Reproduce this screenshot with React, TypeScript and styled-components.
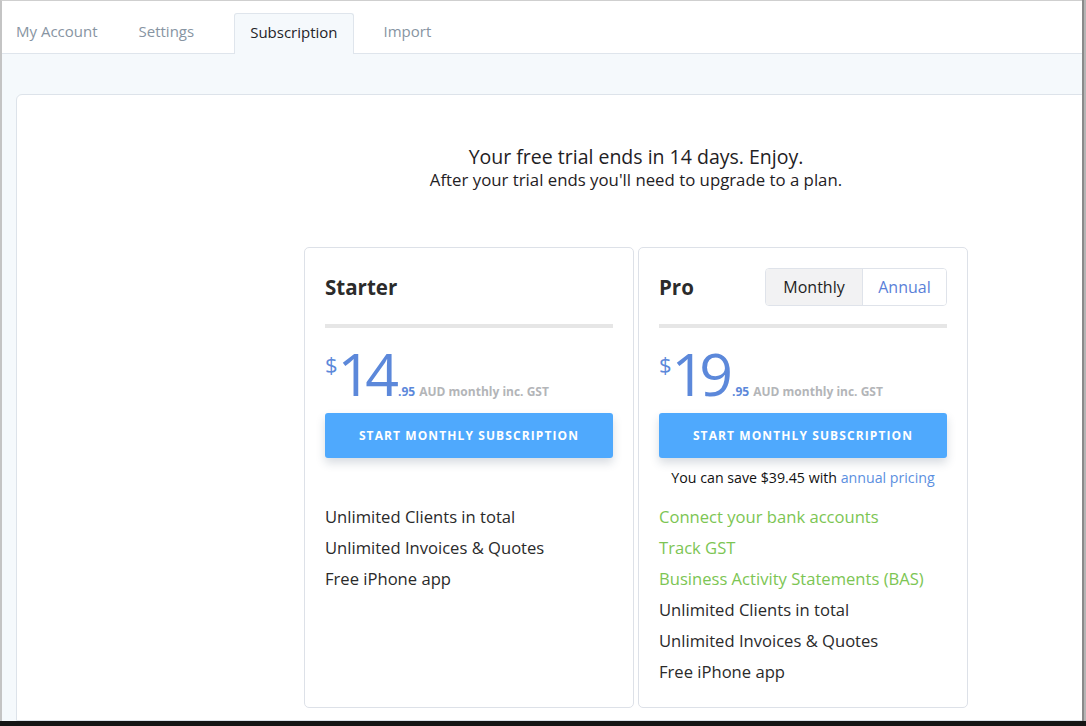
import React from "react";
import styled, { createGlobalStyle } from "styled-components";

const Global = createGlobalStyle`
  html, body { margin: 0; padding: 0; }
  body { font-family: "Open Sans", "Liberation Sans", sans-serif; }
  * { box-sizing: border-box; }
`;

const FONT = `"Open Sans", "Liberation Sans", sans-serif`;

const Frame = styled.div`
  width: 1086px;
  height: 726px;
  background: #151515;
  display: flex;
  flex-direction: column;
  overflow: hidden;
`;

const Screen = styled.div`
  flex: 1;
  margin: 0 4px 5px 0;
  border-top: 1px solid #cfcfcf;
  border-left: 2px solid #c4c4c4;
  box-shadow: 2px 0 0 #8a8a8a, 4px 0 0 #b5b5b5;
  background: #f5f9fc;
  overflow: hidden;
  display: flex;
  flex-direction: column;
  font-family: ${FONT};
`;

const TabBar = styled.div`
  height: 53px;
  flex: none;
  background: #ffffff;
  border-bottom: 1px solid #dfe5ec;
  display: flex;
  align-items: flex-end;
`;

const Tab = styled.div<{ $active?: boolean; $gap: number }>`
  height: ${(p) => (p.$active ? "41px" : "40px")};
  margin-bottom: ${(p) => (p.$active ? "-1px" : "0")};
  margin-right: ${(p) => p.$gap}px;
  padding: 0 ${(p) => (p.$active ? 15 : 16)}px 5px;
  display: flex;
  align-items: center;
  font-size: 15px;
  color: ${(p) => (p.$active ? "#1f2328" : "#8794a2")};
  background: ${(p) => (p.$active ? "#f5f9fc" : "transparent")};
  border: 1px solid ${(p) => (p.$active ? "#dfe5ec" : "transparent")};
  border-bottom: none;
  border-radius: 3px 3px 0 0;
  &:first-child { margin-left: -3px; }
`;

const Body = styled.div`
  flex: 1;
  padding: 40px 0 0 14px;
  display: flex;
`;

const Card = styled.div`
  width: 1240px;
  flex: none;
  background: #ffffff;
  border: 1px solid #dde3ea;
  border-radius: 6px 6px 0 0;
  display: flex;
  flex-direction: column;
  align-items: center;
  padding-top: 50px;
`;

const Heading = styled.h1`
  margin: 0;
  font-size: 19.5px;
  line-height: 24px;
  font-weight: 400;
  color: #1f2124;
`;

const Sub = styled.p`
  margin: 0;
  font-size: 16.8px;
  line-height: 22px;
  color: #1f2124;
`;

const Plans = styled.div`
  margin-top: 56px;
  display: flex;
  gap: 4px;
`;

const Plan = styled.div`
  width: 330px;
  border: 1px solid #dde1e8;
  border-radius: 5px;
  padding: 20px 20px 20px;
  display: flex;
  flex-direction: column;
`;

const PlanHead = styled.div`
  height: 38px;
  display: flex;
  align-items: center;
  justify-content: space-between;
`;

const PlanName = styled.h2`
  margin: 0;
  font-size: 20.5px;
  font-weight: 700;
  color: #2b2b2b;
`;

const Toggle = styled.div`
  display: flex;
  height: 38px;
  border: 1px solid #dfe3ea;
  border-radius: 4px;
  overflow: hidden;
`;

const ToggleOpt = styled.div<{ $on?: boolean; $w: number }>`
  width: ${(p) => p.$w}px;
  display: flex;
  align-items: center;
  justify-content: center;
  font-size: 16px;
  background: ${(p) => (p.$on ? "#f2f2f3" : "#ffffff")};
  color: ${(p) => (p.$on ? "#1e1e1e" : "#5a7fd8")};
  & + & { border-left: 1px solid #dfe3ea; }
`;

const Divider = styled.div`
  height: 4px;
  background: #e6e6e6;
  margin-top: 18px;
`;

const PriceRow = styled.div`
  display: flex;
  align-items: baseline;
  margin-top: 15px;
  height: 65px;
  color: #5c88da;
`;

const Currency = styled.span`
  font-size: 22px;
  line-height: 22px;
  align-self: flex-start;
  margin-top: 10px;
  margin-right: 2px;
`;

const Amount = styled.span`
  font-size: 59px;
  line-height: 60px;
  letter-spacing: -6px;
  margin-left: -2px;
`;

const Cents = styled.span`
  font-size: 12px;
  font-weight: 700;
  margin-left: 5px;
`;

const Terms = styled.span`
  font-size: 12px;
  font-weight: 700;
  color: #b3b5b8;
  margin-left: 4px;
`;

const CTA = styled.button`
  margin-top: 5px;
  height: 45px;
  border: none;
  border-radius: 3px;
  background: #4fa9fd;
  color: #ffffff;
  font-family: ${FONT};
  font-size: 12px;
  font-weight: 700;
  letter-spacing: 1.1px;
  box-shadow: 0 5px 10px rgba(40, 60, 90, 0.18);
`;

const Note = styled.div<{ $hidden?: boolean }>`
  height: 38px;
  padding-top: 10px;
  text-align: center;
  font-size: 14.2px;
  color: #111;
  visibility: ${(p) => (p.$hidden ? "hidden" : "visible")};
  a { color: #5b8fe0; text-decoration: none; }
`;

const Features = styled.ul`
  list-style: none;
  margin: 5px 0 0;
  padding: 0;
`;

const Feature = styled.li<{ $highlight?: boolean }>`
  font-size: 16.6px;
  line-height: 31px;
  color: ${(p) => (p.$highlight ? "#7cc553" : "#2a2a2a")};
`;

type PlanData = {
  name: string;
  amount: string;
  toggle?: boolean;
  note?: boolean;
  extras: string[];
};

const plans: PlanData[] = [
  { name: "Starter", amount: "14", extras: [] },
  {
    name: "Pro",
    amount: "19",
    toggle: true,
    note: true,
    extras: ["Connect your bank accounts", "Track GST", "Business Activity Statements (BAS)"],
  },
];

const base = ["Unlimited Clients in total", "Unlimited Invoices & Quotes", "Free iPhone app"];

const tabs = [
  { label: "My Account", gap: 7 },
  { label: "Settings", gap: 23 },
  { label: "Subscription", gap: 13, active: true },
  { label: "Import", gap: 0 },
];

export default function App() {
  return (
    <Frame>
      <Global />
      <Screen>
        <TabBar>
          {tabs.map((t) => (
            <Tab key={t.label} $active={t.active} $gap={t.gap}>
              {t.label}
            </Tab>
          ))}
        </TabBar>
        <Body>
          <Card>
            <Heading>Your free trial ends in 14 days. Enjoy.</Heading>
            <Sub>After your trial ends you'll need to upgrade to a plan.</Sub>
            <Plans>
              {plans.map((p) => (
                <Plan key={p.name}>
                  <PlanHead>
                    <PlanName>{p.name}</PlanName>
                    {p.toggle && (
                      <Toggle>
                        <ToggleOpt $on $w={96}>Monthly</ToggleOpt>
                        <ToggleOpt $w={84}>Annual</ToggleOpt>
                      </Toggle>
                    )}
                  </PlanHead>
                  <Divider />
                  <PriceRow>
                    <Currency>$</Currency>
                    <Amount>{p.amount}</Amount>
                    <Cents>.95</Cents>
                    <Terms>AUD monthly inc. GST</Terms>
                  </PriceRow>
                  <CTA>START MONTHLY SUBSCRIPTION</CTA>
                  <Note $hidden={!p.note}>
                    You can save $39.45 with <a href="#">annual pricing</a>
                  </Note>
                  <Features>
                    {p.extras.map((f) => (
                      <Feature key={f} $highlight>
                        {f}
                      </Feature>
                    ))}
                    {base.map((f) => (
                      <Feature key={f}>{f}</Feature>
                    ))}
                  </Features>
                </Plan>
              ))}
            </Plans>
          </Card>
        </Body>
      </Screen>
    </Frame>
  );
}
